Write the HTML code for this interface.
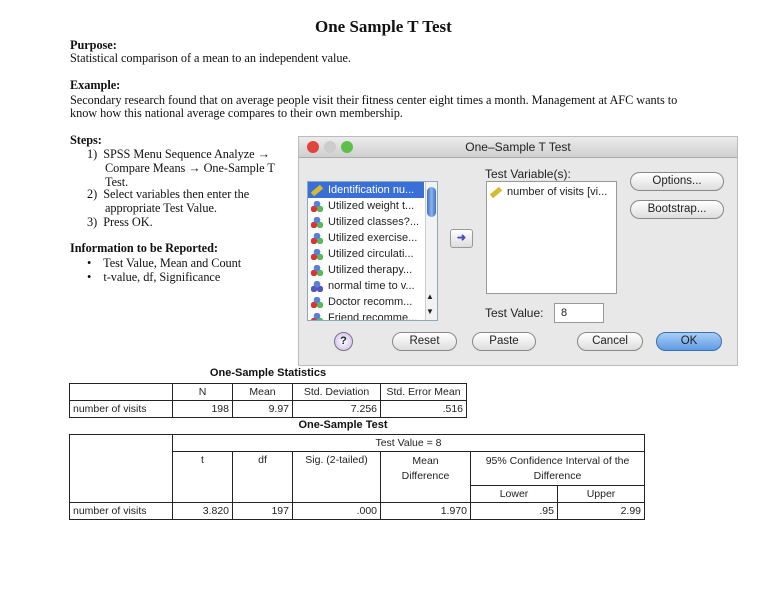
<!DOCTYPE html>
<html><head><meta charset="utf-8"><style>
*{margin:0;padding:0;box-sizing:border-box}
body{width:768px;height:594px;background:#fff;position:relative;overflow:hidden;font-family:"Liberation Serif",serif;color:#111}
.a{position:absolute;white-space:nowrap}
.s{font-size:12.3px;letter-spacing:-0.05px}
.b{font-weight:bold}
.dlg{position:absolute;left:298px;top:136px;width:440px;height:230px;background:#e8e8e8;border:1px solid #bbb;font-family:"Liberation Sans",sans-serif;font-size:11px;color:#222}
.tb{height:21px;background:linear-gradient(#ececec,#cfcfcf);border-bottom:1px solid #aaa;text-align:center;line-height:20px;font-size:12px}
.dot{position:absolute;top:4px;width:12px;height:12px;border-radius:50%}
.box{position:absolute;background:#fff;border:1px solid #999}
.btn{position:absolute;height:19px;border:1px solid #888;border-radius:10px;background:linear-gradient(#fff,#ddd);text-align:center;line-height:17px;font-size:11.5px}
.it{height:16px;line-height:16px;padding-left:20px;position:relative}
.ic{position:absolute;left:3px;top:3px;width:12px;height:11px}
table{position:absolute;border-collapse:collapse;font-family:"Liberation Sans",sans-serif;font-size:10.5px;color:#222}
td{border:1px solid #222;height:17px;padding:0 3px;white-space:nowrap}
.r{text-align:right}.c{text-align:center}
.tt{position:absolute;font-family:"Liberation Sans",sans-serif;font-weight:bold;font-size:11px;transform:translateX(-50%)}
</style></head><body>
<div class="a b" style="left:315px;top:17px;font-size:17px">One Sample T Test</div>
<div class="a s b" style="left:70px;top:38px">Purpose:</div>
<div class="a s" style="left:70px;top:51px">Statistical comparison of a mean to an independent value.</div>
<div class="a s b" style="left:70px;top:78px">Example:</div>
<div class="a s" style="left:70px;top:93px">Secondary research found that on average people visit their fitness center eight times a month. Management at AFC wants to</div>
<div class="a s" style="left:70px;top:106px">know how this national average compares to their own membership.</div>
<div class="a s b" style="left:70px;top:133px">Steps:</div>
<div class="a s" style="left:87px;top:147px">1)&nbsp; SPSS Menu Sequence Analyze →</div>
<div class="a s" style="left:105px;top:161px">Compare Means → One-Sample T</div>
<div class="a s" style="left:105px;top:175px">Test.</div>
<div class="a s" style="left:87px;top:187px">2)&nbsp; Select variables then enter the</div>
<div class="a s" style="left:105px;top:201px">appropriate Test Value.</div>
<div class="a s" style="left:87px;top:215px">3)&nbsp; Press OK.</div>
<div class="a s b" style="left:70px;top:241px">Information to be Reported:</div>
<div class="a s" style="left:87px;top:256px">•&nbsp;&nbsp;&nbsp; Test Value, Mean and Count</div>
<div class="a s" style="left:87px;top:270px">•&nbsp;&nbsp;&nbsp; t-value, df, Significance</div>

<div class="dlg">
<div class="tb">One–Sample T Test</div>
<div class="dot" style="left:8px;background:#e0443a"></div>
<div class="dot" style="left:25px;background:#ccc"></div>
<div class="dot" style="left:42px;background:#5cc04a"></div>
<div class="box" style="left:8px;top:44px;width:131px;height:140px;overflow:hidden;border-color:#8ab">
<div class="it" style="background:#3a6fd8;color:#fff;width:116px"><span class="ic" style="background:#d9b92f;transform:rotate(-40deg);height:5px;top:6px"></span>Identification nu...</div>
<div class="it">Utilized weight t...<span class="ic" style="background:radial-gradient(circle at 6px 3px,#5a7fd8 3px,transparent 3.5px),radial-gradient(circle at 3px 8px,#d33 3px,transparent 3.5px),radial-gradient(circle at 9px 8px,#5b5 3px,transparent 3.5px)"></span></div>
<div class="it">Utilized classes?...<span class="ic" style="background:radial-gradient(circle at 6px 3px,#5a7fd8 3px,transparent 3.5px),radial-gradient(circle at 3px 8px,#d33 3px,transparent 3.5px),radial-gradient(circle at 9px 8px,#5b5 3px,transparent 3.5px)"></span></div>
<div class="it">Utilized exercise...<span class="ic" style="background:radial-gradient(circle at 6px 3px,#5a7fd8 3px,transparent 3.5px),radial-gradient(circle at 3px 8px,#d33 3px,transparent 3.5px),radial-gradient(circle at 9px 8px,#5b5 3px,transparent 3.5px)"></span></div>
<div class="it">Utilized circulati...<span class="ic" style="background:radial-gradient(circle at 6px 3px,#5a7fd8 3px,transparent 3.5px),radial-gradient(circle at 3px 8px,#d33 3px,transparent 3.5px),radial-gradient(circle at 9px 8px,#5b5 3px,transparent 3.5px)"></span></div>
<div class="it">Utilized therapy...<span class="ic" style="background:radial-gradient(circle at 6px 3px,#5a7fd8 3px,transparent 3.5px),radial-gradient(circle at 3px 8px,#d33 3px,transparent 3.5px),radial-gradient(circle at 9px 8px,#5b5 3px,transparent 3.5px)"></span></div>
<div class="it">normal time to v...<span class="ic" style="background:radial-gradient(circle at 6px 3px,#5a7fd8 3px,transparent 3.5px),radial-gradient(circle at 3px 8px,#55b 3px,transparent 3.5px),radial-gradient(circle at 9px 8px,#55b 3px,transparent 3.5px)"></span></div>
<div class="it">Doctor recomm...<span class="ic" style="background:radial-gradient(circle at 6px 3px,#5a7fd8 3px,transparent 3.5px),radial-gradient(circle at 3px 8px,#d33 3px,transparent 3.5px),radial-gradient(circle at 9px 8px,#5b5 3px,transparent 3.5px)"></span></div>
<div class="it">Friend recomme...<span class="ic" style="background:radial-gradient(circle at 6px 3px,#5a7fd8 3px,transparent 3.5px),radial-gradient(circle at 3px 8px,#d33 3px,transparent 3.5px),radial-gradient(circle at 9px 8px,#5b5 3px,transparent 3.5px)"></span></div>
<div style="position:absolute;left:117px;top:0;width:13px;height:140px;background:#f2f2f2;border-left:1px solid #ccc"></div>
<div style="position:absolute;left:119px;top:5px;width:9px;height:30px;border-radius:5px;background:linear-gradient(90deg,#3a70c8,#8bb4ea,#3a70c8)"></div>
<div style="position:absolute;left:118px;top:110px;font-size:8px">▲</div>
<div style="position:absolute;left:118px;top:125px;font-size:8px">▼</div>
</div>
<div class="box" style="left:151px;top:92px;width:23px;height:19px;border-radius:3px;background:linear-gradient(#fff,#ddd);color:#4a4ac0;text-align:center;line-height:17px;font-weight:bold">➜</div>
<div class="a" style="left:186px;top:30px;font-size:12px">Test Variable(s):</div>
<div class="box" style="left:187px;top:44px;width:131px;height:113px"><div class="it" style="padding-left:20px;margin-top:2px">number of visits [vi...<span class="ic" style="background:#d9b92f;transform:rotate(-40deg);height:5px;top:6px"></span></div></div>
<div class="btn" style="left:331px;top:35px;width:94px">Options...</div>
<div class="btn" style="left:331px;top:63px;width:94px">Bootstrap...</div>
<div class="a" style="left:186px;top:169px;font-size:12px">Test Value:</div>
<div class="box" style="left:255px;top:166px;width:50px;height:20px;padding:3px 6px">8</div>
<div style="position:absolute;left:35px;top:195px;width:19px;height:19px;border-radius:50%;border:1px solid #777;background:radial-gradient(#fff,#c9b6ee);text-align:center;line-height:17px;font-weight:bold">?</div>
<div class="btn" style="left:93px;top:195px;width:65px">Reset</div>
<div class="btn" style="left:173px;top:195px;width:64px">Paste</div>
<div class="btn" style="left:278px;top:195px;width:66px">Cancel</div>
<div class="btn" style="left:357px;top:195px;width:66px;background:linear-gradient(#a9cdf5,#5f9be4);border-color:#3a6fb0">OK</div>
</div>

<div class="tt" style="left:268px;top:367px">One-Sample Statistics</div>
<table style="left:69px;top:383px;width:398px">
<tr><td style="width:103px"></td><td class="c" style="width:60px">N</td><td class="c" style="width:60px">Mean</td><td class="c" style="width:88px">Std. Deviation</td><td class="c">Std. Error Mean</td></tr>
<tr><td>number of visits</td><td class="r">198</td><td class="r">9.97</td><td class="r">7.256</td><td class="r">.516</td></tr>
</table>
<div class="tt" style="left:343px;top:419px">One-Sample Test</div>
<table style="left:69px;top:434px;width:576px">
<tr><td rowspan="3" style="width:103px"></td><td colspan="6" class="c">Test Value = 8</td></tr>
<tr><td rowspan="2" class="c" style="width:60px;vertical-align:top;padding-top:2px">t</td><td rowspan="2" class="c" style="width:60px;vertical-align:top;padding-top:2px">df</td><td rowspan="2" class="c" style="width:88px;vertical-align:top;padding-top:2px">Sig. (2-tailed)</td><td rowspan="2" class="c" style="width:90px;vertical-align:top;padding-top:2px;line-height:15px">Mean<br>Difference</td><td colspan="2" class="c" style="height:34px;line-height:15px">95% Confidence Interval of the<br>Difference</td></tr>
<tr><td class="c" style="width:87px">Lower</td><td class="c">Upper</td></tr>
<tr><td>number of visits</td><td class="r">3.820</td><td class="r">197</td><td class="r">.000</td><td class="r">1.970</td><td class="r">.95</td><td class="r">2.99</td></tr>
</table>
</body></html>
